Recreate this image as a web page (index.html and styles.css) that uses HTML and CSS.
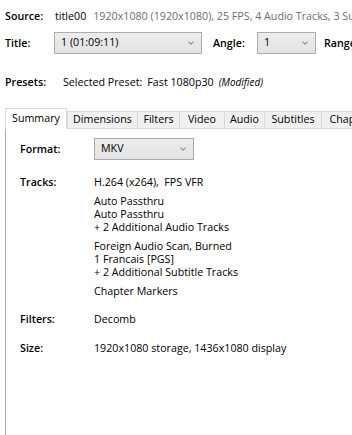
FILE: index.html
```html
<!DOCTYPE html>
<html lang="en">
  <head>
    <meta charset="utf-8" />
    <title>Summary</title>
    <link rel="stylesheet" href="styles.css">
  </head>
  <body>
    <header class="source-panel">
      <div class="row source-row">
        <span class="label">Source:</span>
        <span class="source-name">title00</span>
        <span class="source-info">1920x1080 (1920x1080), 25 FPS, 4 Audio Tracks, 3 Subtitle Tracks</span>
      </div>

      <div class="row title-row">
        <span class="label">Title:</span>
        <div class="combo title-combo">1 (01:09:11)<i class="chevron"></i></div>
        <span class="label angle-label">Angle:</span>
        <div class="combo angle-combo">1<i class="chevron"></i></div>
        <span class="label range-label">Range:</span>
      </div>

      <div class="row presets-row">
        <span class="label presets-label">Presets:</span>
        <span class="preset-caption">Selected Preset:</span>
        <span class="preset-name">Fast 1080p30</span>
        <em class="preset-state">(Modified)</em>
      </div>
    </header>

    <nav class="tabs">
      <span class="tab tab-summary active">Summary</span>
      <span class="tab tab-dimensions">Dimensions</span>
      <span class="tab tab-filters">Filters</span>
      <span class="tab tab-video">Video</span>
      <span class="tab tab-audio">Audio</span>
      <span class="tab tab-subtitles">Subtitles</span>
      <span class="tab tab-chapters">Chapters</span>
    </nav>

    <main class="tab-page">
      <div class="field format-field">
        <span class="field-label">Format:</span>
        <div class="combo format-combo">MKV<i class="chevron"></i></div>
      </div>

      <div class="field tracks-field">
        <span class="field-label">Tracks:</span>
        <div class="field-value">
          <p>H.264 (x264),&nbsp; FPS VFR</p>
          <p>Auto Passthru<br />Auto Passthru<br />+ 2 Additional Audio Tracks</p>
          <p>Foreign Audio Scan, Burned<br />1 Francais [PGS]<br />+ 2 Additional Subtitle Tracks</p>
          <p>Chapter Markers</p>
        </div>
      </div>

      <div class="field filters-field">
        <span class="field-label">Filters:</span>
        <div class="field-value"><p>Decomb</p></div>
      </div>

      <div class="field size-field">
        <span class="field-label">Size:</span>
        <div class="field-value"><p>1920x1080 storage, 1436x1080 display</p></div>
      </div>
    </main>
  </body>
</html>
```

FILE: styles.css
```css
:root {
  --text-color: #000000;
  --muted-color: #6d6d6d;
  --border-color: #adadad;
  --tab-border: #d9d9d9;
  --font-primary: "Open Sans", "Noto Sans", sans-serif;
}

*,
*::before,
*::after {
  margin: 0;
  padding: 0;
  box-sizing: border-box;
}

html,
body {
  width: 352px;
  height: 435px;
  overflow: hidden;
  background: #ffffff;
  color: var(--text-color);
  font-family: var(--font-primary);
  font-size: 10.7px;
  line-height: 13px;
}

.source-panel {
  padding: 10px 0 0 5px;
}

.row {
  display: flex;
  align-items: center;
  white-space: nowrap;
}

.row > * {
  flex-shrink: 0;
}

.label {
  font-weight: 600;
}

.source-row .label {
  width: 50px;
}

.source-info {
  margin-left: 7px;
  color: var(--muted-color);
}

.title-row {
  margin-top: 9px;
  height: 22px;
}

.title-row > .label:first-child {
  width: 49px;
}

.combo {
  position: relative;
  height: 22px;
  padding: 3px 0 0 6px;
  border: 1px solid var(--border-color);
  background: linear-gradient(#ececec, #e3e3e3);
}

.chevron {
  position: absolute;
  right: 8px;
  top: 7px;
  width: 4px;
  height: 4px;
  border-right: 1px solid #8a8a8a;
  border-bottom: 1px solid #8a8a8a;
  transform: rotate(45deg);
}

.title-combo {
  width: 148px;
}

.angle-label {
  margin-left: 11px;
  width: 44px;
}

.angle-combo {
  width: 59px;
}

.range-label {
  margin-left: 8px;
}

.presets-row {
  margin-top: 22px;
}

.presets-label {
  width: 58px;
}

.preset-name {
  margin-left: 5px;
}

.preset-state {
  margin-left: 5px;
  font-size: 10px;
}

.tabs {
  display: flex;
  align-items: flex-end;
  margin: 19px 0 0 5px;
  height: 20px;
  white-space: nowrap;
}

.tab {
  flex-shrink: 0;
  height: 17px;
  padding-top: 1px;
  margin-left: -1px;
  border: 1px solid var(--tab-border);
  border-bottom: none;
  background: #f0f0f0;
  text-align: center;
}

.tab.active {
  position: relative;
  z-index: 1;
  height: 21px;
  margin: 0 0 -1px 0;
  padding-top: 3px;
  background: #ffffff;
}

.tab.active + .tab {
  margin-left: 0;
}

.tab-summary {
  width: 62px;
}

.tab-dimensions {
  width: 71px;
}

.tab-filters {
  width: 43px;
}

.tab-video {
  width: 46px;
}

.tab-audio {
  width: 41px;
}

.tab-subtitles {
  width: 58px;
}

.tab-chapters {
  width: 62px;
}

.tab-page {
  margin-left: 5px;
  height: 310px;
  padding: 9px 0 0 14px;
  border-top: 1px solid var(--tab-border);
  border-left: 1px solid var(--border-color);
}

.field {
  display: flex;
}

.field-label {
  width: 74px;
  font-weight: 600;
}

.format-field {
  align-items: center;
}

.format-combo {
  width: 100px;
}

.tracks-field {
  margin-top: 16px;
}

.field-value p + p {
  margin-top: 6px;
}

.filters-field {
  margin-top: 15px;
}

.size-field {
  margin-top: 16px;
}
```
